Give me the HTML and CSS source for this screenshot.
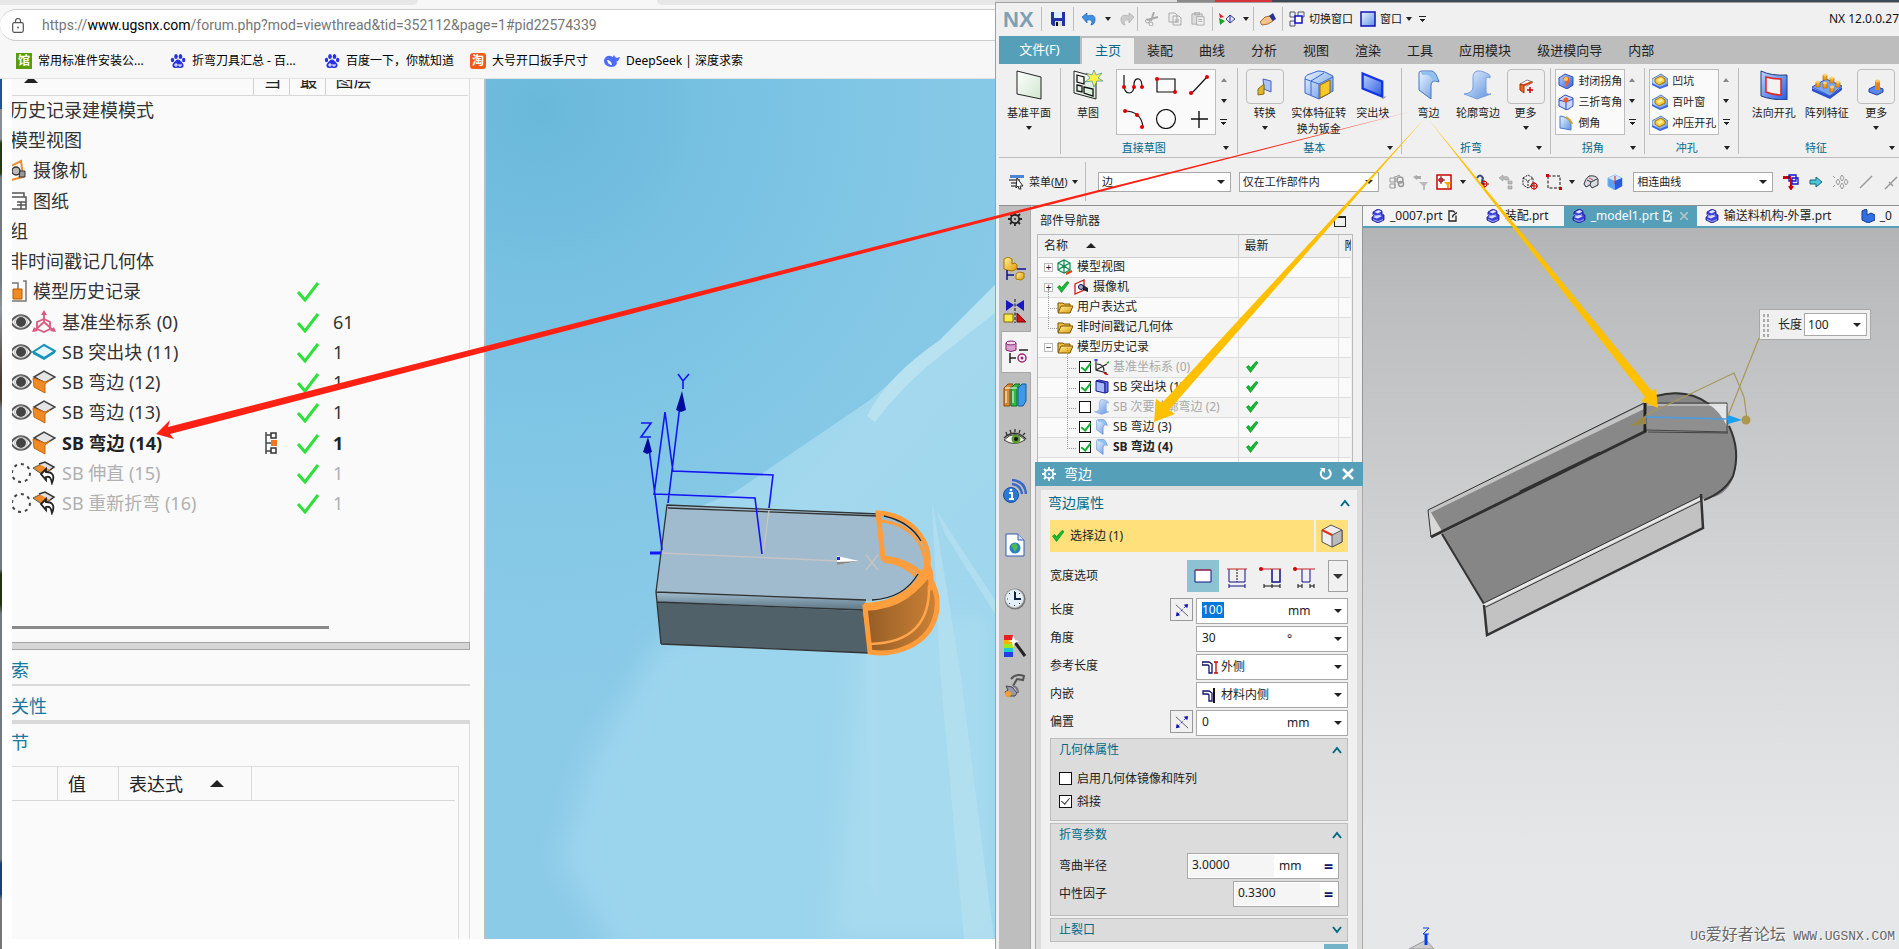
FILE: index.html
```html
<!DOCTYPE html>
<html lang="zh-CN">
<head>
<meta charset="utf-8">
<title>NX 12 弯边</title>
<link rel="stylesheet" href="styles.css">
</head>
<body>
<svg class="defs" aria-hidden="true">
  <defs>
    <linearGradient id="gBlue" x1="0" y1="0" x2="1" y2="1"><stop offset="0" stop-color="#eef5ff"/><stop offset="1" stop-color="#5c93e0"/></linearGradient>
    <linearGradient id="gDeep" x1="0" y1="0" x2="1" y2="1"><stop offset="0" stop-color="#bcd2ff"/><stop offset="1" stop-color="#2b5be0"/></linearGradient>
    <linearGradient id="gGold" x1="0" y1="0" x2="1" y2="1"><stop offset="0" stop-color="#fff3a0"/><stop offset="1" stop-color="#e09a00"/></linearGradient>
    <linearGradient id="gGreen" x1="0" y1="0" x2="1" y2="1"><stop offset="0" stop-color="#fff"/><stop offset="1" stop-color="#cfe6cf"/></linearGradient>
  </defs>
  <symbol id="check" viewBox="0 0 12 12"><path d="M.5 6l4 5.500L12 1.500 10 .5 4.500 6.800 2.600 4.500z" fill="#10c030" stroke="#078a1c" stroke-width=".7"/></symbol>
  <symbol id="tick" viewBox="0 0 22 20"><path d="M1 10l7 8L21 1" fill="none" stroke="#2ee03a" stroke-width="3"/></symbol>
  <symbol id="paw" viewBox="0 0 16 16"><g fill="#2932e1"><ellipse cx="6" cy="3.500" rx="1.800" ry="2.500"/><ellipse cx="10.500" cy="3.500" rx="1.800" ry="2.500"/><ellipse cx="2.500" cy="7" rx="1.700" ry="2.200"/><ellipse cx="13.700" cy="7" rx="1.700" ry="2.200"/><path d="M8 6.500c2 0 3 2 4.500 3.500 2 2 1 5-1.500 5-1 0-2-.3-3-.3s-2 .3-3 .3c-2.500 0-3.500-3-1.500-5C5 8.500 6 6.500 8 6.500z"/></g><path d="M5 13v-2h2v2zM9 11v2h2v-2" fill="none" stroke="#fff"/></symbol>
  <symbol id="prt" viewBox="0 0 14 14"><path d="M2 3l5-3 4 2v3l2 1v5l-6 3-6-3V8l2-1-1-1z" fill="#3c40d8" stroke="#15158a" stroke-width=".8"/><path d="M3.500 3l4-2 3 1.500-4 2zM2 8l5-2 4 1-5 2.500z" fill="#dfe4ff"/><path d="M2 5.500l4 2 4-2M2 10.500l5 2 5-2" fill="none" stroke="#b9c0ff" stroke-width=".8"/></symbol>
  <symbol id="note" viewBox="0 0 10 12"><path d="M8 5.500V11H1V1h4l2 1.500M4.500 7.500l.5-2 4-3" fill="none" stroke="currentColor" stroke-width="1.300"/></symbol>
  <symbol id="eye" viewBox="0 0 22 16"><path d="M1 8C6-1 16-1 21 8 16 17 6 17 1 8z" fill="#fff" stroke="#555" stroke-width="1.800"/><circle cx="11" cy="8" r="5" fill="#444"/><circle cx="11" cy="8" r="6.300" fill="none" stroke="#999" stroke-width=".8"/></symbol>
  <symbol id="eyeoff" viewBox="0 0 22 22"><circle cx="11" cy="11" r="9" fill="none" stroke="#444" stroke-width="2" stroke-dasharray="3 4"/></symbol>
  <symbol id="fl" viewBox="0 0 24 24"><path d="M2 7l10-6 11 6-10 6z" fill="#e5e5e5" stroke="#444" stroke-width="1.500"/><path d="M1 8l12 4 5-2-5 4v9L2 17z" fill="#f08a24" stroke="#c86a10"/></symbol>
  <symbol id="fold" viewBox="0 0 24 24"><path d="M1 7l10-5 10 5-10 7z" fill="#f08a24" stroke="#555"/><path d="M7 3l6-2 9 5-4 3" fill="#ddd" stroke="#333" stroke-width="1.500"/><path d="M9 13l5-5v3c7 0 9 4 6 11-1-5-2-7-6-6v3z" fill="#fff" stroke="#222" stroke-width="1.800"/></symbol>
  <symbol id="slab" viewBox="0 0 24 16"><path d="M12 1l11 6-11 7L1 8z" fill="#e8f6fb" stroke="#1494b8" stroke-width="2"/><path d="M1 8v2l11 6 11-7V7l-11 7z" fill="#1494b8"/></symbol>
  <symbol id="folder" viewBox="0 0 16 14"><path d="M1 12V3h5l1 1h6v3" fill="#f0c040" stroke="#7a5200"/><path d="M1 13L4 6h12l-3 7z" fill="url(#gGold)" stroke="#7a5200"/></symbol>
  <symbol id="bend" viewBox="0 0 22 30"><path d="M1 3Q1 1 4 1h10q4 1 7 11-2-1-4-1-4 0-4 5v13L1 20z" fill="url(#gBlue)" stroke="#3f76c4"/><path d="M3 2h10q5 1 7 9l-5-1q-3-6-11-5z" fill="#8ec1ef"/></symbol>
  <symbol id="contour" viewBox="0 0 30 30"><path d="M12 2q4-3 13 2 3 1 2 4-2-2-4 0v13q0 4 5 3l-14 5Q4 25 1 24q9-1 9-7V7q0-3 2-5z" fill="url(#gBlue)" stroke="#7a9edb"/></symbol>
  <symbol id="plate" viewBox="0 0 24 26"><path d="M3 3l17 7v13L3 16z" fill="url(#gDeep)" stroke="#1233e8" stroke-width="2"/><path d="M20 25l3-2" stroke="#999"/></symbol>
  <symbol id="cube" viewBox="0 0 30 30"><path d="M1 9Q1 5 6 4l8-3q3 0 7 1l8 4v15L15 29 1 23z" fill="url(#gBlue)" stroke="#3d64d0"/><path d="M1 9l14 5V29M15 14L29 7M7 11v14M7 11L20 3" fill="none" stroke="#3d64d0"/><path d="M16 15l10-5v13l-10 5z" fill="#f7c62a" stroke="#8a6a00"/></symbol>
  <symbol id="corner" viewBox="0 0 16 16"><path d="M1 5l6-4 8 3v8l-6 4-8-4z" fill="url(#gDeep)" stroke="#2f4fc0"/><path d="M5 5q3-3 6 0v4l-3 5-1-6z" fill="#f06020"/><circle cx="8" cy="6" r="2" fill="#ffd24a"/></symbol>
  <symbol id="corner3" viewBox="0 0 16 16"><path d="M1 5l6-4 8 3v8l-6 4-8-4z" fill="#c9d5ff" stroke="#2f4fc0"/><path d="M8 5v11M1 6l7 2 7-3" stroke="#2f4fc0" fill="none"/><circle cx="8" cy="6" r="2.500" fill="#f06020"/></symbol>
  <symbol id="cham" viewBox="0 0 16 16"><path d="M2 1q9 1 11 8v6L2 13z" fill="url(#gBlue)" stroke="#4a7ad0"/><path d="M8 2q5 3 6 7" stroke="#e0a020" stroke-width="2" fill="none"/></symbol>
  <symbol id="punch" viewBox="0 0 16 16"><path d="M0 6l9-5 7 5v5l-8 4-8-4z" fill="url(#gBlue)" stroke="#4f7ec8"/><path d="M0 10l8 4 8-3v2l-8 3-8-4z" fill="#3d6ae0"/><path d="M3 6l6-3 4 3v3l-6 3-4-3z" fill="#f7cf45" stroke="#a86c00"/><path d="M5 7l4-2 2 2-4 2z" fill="#fff1a0"/></symbol>
  <symbol id="gear" viewBox="0 0 14 14"><circle cx="7" cy="7" r="4.200" fill="none" stroke="currentColor" stroke-width="1.800"/><path d="M7 0v3M7 11v3M0 7h3M11 7h3M2 2l2 2M10 10l2 2M12 2l-2 2M4 10l-2 2" stroke="currentColor" stroke-width="1.800"/><circle cx="7" cy="7" r="1" fill="currentColor"/></symbol>
  <symbol id="flip" viewBox="0 0 16 16"><path d="M1 2l14 13" stroke="#555"/><path d="M3 13L13 3" stroke="#2a2ad0" stroke-dasharray="3 2"/><path d="M15 1l-1 5-4-4zM1 15l1-5 4 4z" fill="#1010b0"/></symbol>
  <symbol id="up" viewBox="0 0 10 8"><path d="M1 7l4-5 4 5" fill="none" stroke="#006a85" stroke-width="2"/></symbol>
</svg>

<main class="screen">
  <section class="browser">
    <div class="tabstrip"><span></span><span></span></div>
    <div class="address">
      <svg class="lock" viewBox="0 0 12 15"><rect x=".7" y="4.700" width="10.600" height="9.600" rx="1.500" fill="none" stroke="#555" stroke-width="1.200"/><path d="M3.500 4.500V3a2.500 2.500 0 015 0v1.500" fill="none" stroke="#555" stroke-width="1.200"/><circle cx="6" cy="9.500" r=".9" fill="#555"/></svg>
      <span class="url">https://<b>www.ugsnx.com</b>/forum.php?mod=viewthread&amp;tid=352112&amp;page=1#pid22574339</span>
    </div>
    <nav class="bookmarks">
      <a href="#" class="wide"><span class="fav green">馆</span>常用标准件安装公...</a>
      <a href="#" class="wide"><svg class="i16"><use href="#paw"/></svg>折弯刀具汇总 - 百...</a>
      <a href="#"><svg class="i16"><use href="#paw"/></svg>百度一下，你就知道</a>
      <a href="#"><span class="fav orange">淘</span>大号开口扳手尺寸</a>
      <a href="#"><svg class="i16" viewBox="0 0 16 16"><path d="M1 5q2-3 6-2 4 2 5 5l1 2q-1 4-6 4Q0 13 0 8q0-2 1-3z" fill="#4d6bfe"/><path d="M10 2q1 3 3 3 2-1 3-1-1 4-4 5l-4-4z" fill="#4d6bfe"/><path d="M3 7q4 0 5 5-4 0-5-5z" fill="#fff"/></svg>DeepSeek | 深度求索</a>
    </nav>
    <div class="page">
      <div class="edge"></div>
      <div class="post">
        <div class="panel">
          <div class="hbox">
          <table class="hist">
            <thead><tr><th><i class="tri"></i></th><th><span>当</span></th><th><span>最</span></th><th><span>图层</span></th></tr></thead>
            <tbody>
              <tr><td><div>历史记录建模模式</div></td><td></td><td></td><td></td></tr>
              <tr><td><div>模型视图</div></td><td></td><td></td><td></td></tr>
              <tr><td><div><svg class="half" viewBox="0 0 16 22"><path d="M0 7l10-5 2 16-12 3" fill="#fff" stroke="#f08a24" stroke-width="2"/><circle cx="5" cy="12" r="4" fill="#bbb" stroke="#333" stroke-width="1.500"/><path d="M9 12h5v6H8z" fill="#999" stroke="#333"/></svg>摄像机</div></td><td></td><td></td><td></td></tr>
              <tr><td><div><svg class="half" viewBox="0 0 16 22"><path d="M0 3h13v4H0M0 19h15V7h-9M6 12h9M10 12v7M6 15h9" fill="#fff" stroke="#555" stroke-width="1.500"/></svg>图纸</div></td><td></td><td></td><td></td></tr>
              <tr><td><div>组</div></td><td></td><td></td><td></td></tr>
              <tr><td><div>非时间戳记几何体</div></td><td></td><td></td><td></td></tr>
              <tr><td><div><svg class="half" viewBox="0 0 16 22"><path d="M0 3h7v8M12 1h3v20h-3M0 21h15" fill="none" stroke="#777" stroke-width="1.500"/><path d="M2 9h9v10H2z" fill="#f08a24" stroke="#b85c00"/></svg>模型历史记录</div></td><td></td><td><svg class="tk"><use href="#tick"/></svg></td><td></td></tr>
              <tr><td><div><svg class="ey"><use href="#eye"/></svg><svg class="fi" viewBox="0 0 24 24"><path d="M12 3v9L2 21M12 12l10 9M5 12l7-3 6 3v7l-6 3-7-3z" fill="none" stroke="#dc5a80" stroke-width="1.800"/><path d="M12 0l3 5H9zM0 22l2-5 4 4zM24 22l-6-1 4-4z" fill="#dc5a80"/></svg>基准坐标系 (0)</div></td><td></td><td><svg class="tk"><use href="#tick"/></svg></td><td>61</td></tr>
              <tr><td><div><svg class="ey"><use href="#eye"/></svg><svg class="fi"><use href="#slab"/></svg>SB 突出块 (11)</div></td><td></td><td><svg class="tk"><use href="#tick"/></svg></td><td>1</td></tr>
              <tr><td><div><svg class="ey"><use href="#eye"/></svg><svg class="fi"><use href="#fl"/></svg>SB 弯边 (12)</div></td><td></td><td><svg class="tk"><use href="#tick"/></svg></td><td>1</td></tr>
              <tr><td><div><svg class="ey"><use href="#eye"/></svg><svg class="fi"><use href="#fl"/></svg>SB 弯边 (13)</div></td><td></td><td><svg class="tk"><use href="#tick"/></svg></td><td>1</td></tr>
              <tr class="cur"><td><div><svg class="ey"><use href="#eye"/></svg><svg class="fi"><use href="#fl"/></svg>SB 弯边 (14)</div></td><td><svg class="mk" viewBox="0 0 12 22"><path d="M1 0v22M1 3h5M1 11h5M1 19h5" stroke="#444" stroke-width="1.500"/><path d="M6 1h5v5H6zM6 16h5v5H6z" fill="#fff" stroke="#333" stroke-width="1.500"/><path d="M6 8h6v6H6z" fill="#f07820"/></svg></td><td><svg class="tk"><use href="#tick"/></svg></td><td>1</td></tr>
              <tr class="off"><td><div><svg class="ey"><use href="#eyeoff"/></svg><svg class="fi"><use href="#fold"/></svg>SB 伸直 (15)</div></td><td></td><td><svg class="tk"><use href="#tick"/></svg></td><td>1</td></tr>
              <tr class="off"><td><div><svg class="ey"><use href="#eyeoff"/></svg><svg class="fi"><use href="#fold"/></svg>SB 重新折弯 (16)</div></td><td></td><td><svg class="tk"><use href="#tick"/></svg></td><td>1</td></tr>
            </tbody>
          </table>
          <div class="hbar"></div>
          </div>
          <div class="splitter"></div>
          <a href="#" class="sec">索</a>
          <a href="#" class="sec thick">关性</a>
          <div class="detail">
            <a href="#" class="sec3">节</a>
            <table class="expr"><thead><tr><th></th><th>值</th><th>表达式<i class="tri"></i></th><th></th></tr></thead></table>
          </div>
        </div>
        <svg class="photo" viewBox="486 79 509 860" preserveAspectRatio="none">
          <defs>
            <radialGradient id="sky" gradientUnits="userSpaceOnUse" cx="540" cy="110" r="620"><stop offset="0" stop-color="#69b8da"/><stop offset=".3" stop-color="#78c1e2"/><stop offset=".65" stop-color="#84c8e6"/><stop offset="1" stop-color="#8ccbe8"/></radialGradient>
            <linearGradient id="ray" x1="0" y1="0" x2="1" y2="1"><stop offset="0" stop-color="#98d2ec"/><stop offset=".5" stop-color="#a8dbef"/><stop offset="1" stop-color="#a2d8ee"/></linearGradient>
            <linearGradient id="roll" x1="0" y1="0" x2="0" y2="1"><stop offset="0" stop-color="#a4bfd0"/><stop offset=".5" stop-color="#7a95a6"/><stop offset="1" stop-color="#5c7380"/></linearGradient>
            <linearGradient id="oran" x1="0" y1="0" x2="1" y2="0"><stop offset="0" stop-color="#955c25"/><stop offset=".35" stop-color="#a96a2c"/><stop offset="1" stop-color="#cc8136"/></linearGradient>
            <filter id="soft" x="-30%" y="-30%" width="160%" height="160%"><feGaussianBlur stdDeviation="12"/></filter>
          </defs>
          <path d="M486 79h509v860H486z" fill="url(#sky)"/>
          <path d="M995 285L940 340 870 400 735 492 680 515v120h315z" fill="url(#ray)" opacity=".85"/>
          <path d="M660 640L590 760 560 860l60 100h400V610H800z" fill="#9bd4ed" filter="url(#soft)"/>
          <path d="M860 610h135v329H830z" fill="#a6daef" filter="url(#soft)"/>
          <path d="M940 340l55-55v28L945 352q-40 30-70 70l-8-6q20-40 73-76z" fill="#b9e2f1"/>
          <path d="M932 500l10 60 18 110 34 269h-30l-24-269zM936 510l59 90v14l-50-80z" fill="#b7e1f1" opacity=".7"/>
          <path d="M867 650h12v250l-12-20z" fill="#aadcf0" opacity=".6"/>
          <path d="M667 505l212 10c35 4 52 30 50 52-8 20-32 33-63 34l-210-9z" fill="#9fbbcd"/>
          <path d="M656 592l210 8-3 11-206-9z" fill="url(#roll)"/>
          <path d="M657 602l206 9 6 42-208-9z" fill="#50616a"/>
          <path d="M661 644l-5-52 11-87 212 9M656 592l210 8M657 602l206 8M661 644l208 9M668 508l210 8" fill="none" stroke="#333" stroke-width="1.300"/>
          <path d="M662 553l177 8M769 510l-6 45" stroke="#c9c3c3" stroke-width="1.300"/>
          <path d="M837 556l22 5-22 4z" fill="#fff"/><path d="M837 562l22-1-22 4z" fill="#888"/><path d="M837 557h3v3h-3z" fill="#22f"/>
          <path d="M866 555l12 15M878 555l-12 15" stroke="#c9c3c3" stroke-width="1.500"/>
          <g fill="none" stroke="#1414f5" stroke-width="1.600"><path d="M662 550l-14-110M668 503l12-98M654 495l11-83 8 60M655 494l100 4 7 56M673 471l100 4-4 33"/><path d="M650 553h11" stroke-width="3"/><path d="M678 374l5 7 6-7M683 381v8M641 423h10l-10 14h10"/></g>
          <path d="M682 391l-6 19 5 2 5-2zM648 437l-5 15 4 2 5-2z" fill="#000a9c"/>
          <path d="M865 607c38-4 52-18 63-32 18 28 9 62-25 74q-16 6-33 3z" fill="url(#oran)" stroke="#ff9d3c" stroke-width="5"/>
          <path d="M870 644c42-1 60-22 59-58" fill="none" stroke="#ffa54a" stroke-width="2.500"/>
          <path d="M864 607c34-1 55-18 64-40" fill="none" stroke="#ff9f3e" stroke-width="8"/>
          <path d="M930 590q3-15-2-25c3-25-18-50-50-52l5 45c14 1 30 7 40 18" fill="none" stroke="#ff9d3c" stroke-width="5"/>
          <path d="M882 521c26 3 45 20 44 54M883 561c15 1 25 7 34 16" fill="none" stroke="#ff9d3c" stroke-width="3"/>
          <path d="M884 516c18 4 30 13 37 25M872 600c20-1 36-9 46-26" fill="none" stroke="#222" stroke-width="1.300"/>
        </svg>
      </div>
    </div>
  </section>

  <section class="nx">
    <header class="title">
      <strong class="logo">NX</strong>
      <div class="qa s1"><button aria-label="保存"><svg class="i14" viewBox="0 0 14 14"><path d="M0 0h14v14H2l-2-2z" fill="#2034a8"/><path d="M3 0h8v6H3z" fill="#dcefff"/><path d="M4 9h7v5H4z" fill="#ddd"/><path d="M5 10h2v4H5z" fill="#111"/></svg></button></div>
      <div class="qa s2"><button aria-label="撤消"><svg class="i14" viewBox="0 0 14 14"><path d="M0 5l5-4v3q9-3 8 5-1 4-4 4 3-6-4-5v3z" fill="#3f8fe8" stroke="#1e64bc" stroke-width=".7"/></svg></button><i class="car"></i><button aria-label="重做"><svg class="i14" viewBox="0 0 14 14"><path d="M14 5L9 1v3Q0 1 1 9q1 4 4 4-3-6 4-5v3z" fill="#ccc" stroke="#aaa" stroke-width=".7"/></svg></button></div>
      <div class="qa s3"><button aria-label="剪切"><svg class="i14" viewBox="0 0 14 14"><path d="M9 0L6 9M13 5L2 8" stroke="#aaa" stroke-width="2"/><circle cx="2.500" cy="9" r="2" fill="none" stroke="#aaa"/><circle cx="6" cy="12" r="2" fill="none" stroke="#aaa"/></svg></button><button aria-label="复制"><svg class="i14" viewBox="0 0 14 14"><path d="M1 1h6l2 2v7H1zM5 4h6l2 2v7H5z" fill="#eee" stroke="#aaa"/><path d="M7 8h4M7 10h4" stroke="#aaa"/></svg></button><button aria-label="粘贴"><svg class="i14" viewBox="0 0 15 15"><path d="M1 2h11v11H1zM4 0h5v3H4z" fill="#ddd" stroke="#aaa"/><path d="M6 5h8v9H6z" fill="#eee" stroke="#aaa"/><path d="M8 8h4M8 10h4" stroke="#aaa"/></svg></button></div>
      <div class="qa s4"><button aria-label="定向"><svg class="i16" viewBox="0 0 16 14"><path d="M0 1l5 4-4 1z" fill="#d22"/><path d="M0 6l6 3-5 4z" fill="#1a2"/><path d="M7 7l4-4 5 4-5 4z" fill="#dfe8ff" stroke="#446"/><path d="M11 3v8" stroke="#22c"/></svg></button><i class="car"></i></div>
      <div class="qa s5"><button aria-label="触控"><svg class="i16" viewBox="0 0 16 14"><path d="M0 10l5-5 5-1 3 5-5 3-6 1z" fill="#f2c48c" stroke="#a86c30"/><path d="M9 4l4-3 3 6-3 2z" fill="#26319c"/></svg></button></div>
      <div class="qa s6"><button><svg class="i16" viewBox="0 0 16 16"><path d="M1 1h5v5H1zM9 1h6v5H9zM1 10h5v5H1z" fill="#e8eeff" stroke="#556"/><path d="M6 5h7v7H6z" fill="#fff" stroke="#11c" stroke-width="1.500"/></svg>切换窗口</button><button><svg class="i16" viewBox="0 0 16 16"><path d="M1 1h14v14H1z" fill="url(#gBlue)" stroke="#11b" stroke-width="1.500"/></svg>窗口<i class="car"></i></button><i class="car bar"></i></div>
      <span class="ver">NX 12.0.0.27</span>
    </header>
    <nav class="tabs">
      <button class="file">文件(F)</button><button class="on">主页</button><button>装配</button><button>曲线</button><button>分析</button><button>视图</button><button>渲染</button><button>工具</button><button>应用模块</button><button>级进模向导</button><button>内部</button>
    </nav>
    <div class="ribbon">
      <div class="grp"><div class="row"><button class="big"><svg class="ico" viewBox="0 0 30 30"><path d="M3 1l24 6v22L3 24z" fill="url(#gGreen)" stroke="#222"/></svg>基准平面<i class="car"></i></button></div></div>
      <div class="grp"><div class="row"><button class="big sk"><svg class="ico" viewBox="0 0 30 30"><path d="M1 1l22 6v22L1 23z" fill="url(#gGreen)" stroke="#222"/><path d="M4 5l7 2v7l-7-2zM4 15l5 1v6l-5-1zM11 17l9 2v7l-9-3z" fill="none" stroke="#111" stroke-width="1.300"/><path d="M21 0l2 5 6-2-4 5 5 3-6 0-3 6-2-6-7 1 5-4-4-5 6 2z" fill="#fff34a" stroke="#3d8ca0" stroke-width=".7"/></svg>草图</button>
        <div class="gal">
          <svg viewBox="0 0 22 20"><path d="M2 0v9q0 9 5 9t5-8q0-7 5-6 3 1 3 9" fill="none" stroke="#111" stroke-width="1.200"/><g fill="#d00"><circle cx="2" cy="12" r="2"/><circle cx="12" cy="12" r="2"/><circle cx="20" cy="12" r="2"/></g></svg>
          <svg viewBox="0 0 22 20"><path d="M2 4h18v13H2z" fill="none" stroke="#111" stroke-width="1.200"/><g fill="#d00"><circle cx="2" cy="4" r="2"/><circle cx="20" cy="17" r="2"/></g></svg>
          <svg viewBox="0 0 22 20"><path d="M3 19L19 2" stroke="#111" stroke-width="1.200"/><g fill="#d00"><circle cx="3" cy="18" r="2"/><circle cx="19" cy="2" r="2"/></g></svg>
          <svg viewBox="0 0 22 20"><path d="M2 2q18 0 19 17" fill="none" stroke="#111" stroke-width="1.200"/><g fill="#d00"><circle cx="3" cy="2" r="2"/><circle cx="15" cy="6" r="2"/><circle cx="20" cy="18" r="2"/></g></svg>
          <svg viewBox="0 0 22 20"><circle cx="11" cy="10" r="9.500" fill="none" stroke="#111" stroke-width="1.200"/></svg>
          <svg viewBox="0 0 22 20"><path d="M11 2v17M3 10h17" stroke="#111" stroke-width="1.400"/></svg>
        </div><div class="cars"><i class="car upw"></i><i class="car"></i><i class="car bar"></i></div></div>
        <div class="cap"><span>直接草图</span><i class="car"></i></div></div>
      <div class="grp"><div class="row"><button class="big w48"><span class="frame"><svg class="i18" viewBox="0 0 18 18"><path d="M7 1l8 2v11l-7-3z" fill="#aac4ff" stroke="#4a60b0"/><path d="M2 11l6-5v10l-6 1z" fill="#e2b62a" stroke="#8a6a10"/></svg></span>转换<i class="car"></i></button><button class="big w66"><svg class="ico"><use href="#cube"/></svg>实体特征转换为钣金</button><button class="big w48"><svg class="ico"><use href="#plate"/></svg>突出块</button></div>
        <div class="cap"><span>基本</span><i class="car"></i></div></div>
      <div class="grp"><div class="row"><button class="big w48"><svg class="ico"><use href="#bend"/></svg>弯边</button><button class="big w54"><svg class="ico"><use href="#contour"/></svg>轮廓弯边</button><button class="big w40"><span class="frame"><svg class="i18" viewBox="0 0 18 18"><path d="M3 6l7-4 6 2-6 4z" fill="#fff" stroke="#888"/><path d="M3 6l4 1v8l-4-3z" fill="#e86820" stroke="#a03000"/><path d="M7 7l8-3" stroke="#e04010" stroke-width="2"/><path d="M13 9v6M10 12h6" stroke="#c00" stroke-width="1.500"/></svg></span>更多<i class="car"></i></button></div>
        <div class="cap"><span>折弯</span><i class="car"></i></div></div>
      <div class="grp"><div class="row"><div class="list"><button><svg class="i16"><use href="#corner"/></svg>封闭拐角</button><button><svg class="i16"><use href="#corner3"/></svg>三折弯角</button><button><svg class="i16"><use href="#cham"/></svg>倒角</button></div><div class="cars"><i class="car upw"></i><i class="car"></i><i class="car bar"></i></div></div><div class="cap"><span>拐角</span><i class="car"></i></div></div>
      <div class="grp"><div class="row"><div class="list"><button><svg class="i16"><use href="#punch"/></svg>凹坑</button><button><svg class="i16"><use href="#punch"/></svg>百叶窗</button><button><svg class="i16"><use href="#punch"/></svg>冲压开孔</button></div><div class="cars"><i class="car upw"></i><i class="car"></i><i class="car bar"></i></div></div><div class="cap"><span>冲孔</span><i class="car"></i></div></div>
      <div class="grp"><div class="row"><button class="big w54 ml"><svg class="ico" viewBox="0 0 30 30"><path d="M2 1q10 5 26 4v25q-16 0-26-4z" fill="url(#gDeep)" stroke="#1b3c78"/><path d="M7 7q7 2 15 2v16q-8 0-15-3z" fill="#f2f2f2" stroke="#d22" stroke-width="1.500"/></svg>法向开孔</button><button class="big w54"><svg class="ico" viewBox="0 0 30 30"><path d="M0 17l14-8 16 7-12 10z" fill="#7ca4f4" stroke="#3358c8"/><path d="M0 18l18 8 12-9v3l-12 9L0 21z" fill="#2b50d0"/><g fill="#eda01e" stroke="#a85c00" stroke-width=".6"><path d="M11 5h4v5h-4zM18 8h4v5h-4zM24 12h4v5h-4zM4 12h4v5H4zM11 13h4v5h-4zM18 17h4v5h-4z"/></g><g fill="#ffd56a"><ellipse cx="13" cy="5" rx="2" ry="1.500"/><ellipse cx="20" cy="8" rx="2" ry="1.500"/><ellipse cx="26" cy="12" rx="2" ry="1.500"/><ellipse cx="6" cy="12" rx="2" ry="1.500"/><ellipse cx="13" cy="13" rx="2" ry="1.500"/><ellipse cx="20" cy="17" rx="2" ry="1.500"/></g></svg>阵列特征</button><button class="big w48"><span class="frame"><svg class="i18" viewBox="0 0 18 18"><path d="M2 11l6-3 8 3v3l-6 3-8-3z" fill="#5b86ea" stroke="#1b3fa0"/><path d="M8 3h5v9H8z" fill="#f08018"/><ellipse cx="10.500" cy="3" rx="2.500" ry="1.500" fill="#ffc060"/></svg></span>更多<i class="car"></i></button></div><div class="cap"><span>特征</span><i class="car"></i></div></div>
    </div>
    <div class="selbar">
      <button class="menu"><svg class="i16" viewBox="0 0 16 16"><path d="M1 1h14v3H1z" fill="#4a84d8"/><path d="M0 6h11M2 9h7M2 12h7" stroke="#555" stroke-width="1.500"/><path d="M8 4l6 8-3 0 1 3-2 0-1-3-2 2z" fill="#fff" stroke="#222"/></svg><span>菜单(<u>M</u>)</span><i class="car"></i></button>
      <span class="combo c1"><select aria-label="类型过滤器"><option>边</option></select></span>
      <span class="combo c2"><select aria-label="选择范围"><option>仅在工作部件内</option></select></span>
      <div class="tools">
        <svg class="i16" viewBox="0 0 16 16"><path d="M6 2v12M1 4h5v4H1zM1 10h5v4H1zM6 3l5-2" fill="none" stroke="#999"/><circle cx="11" cy="6" r="3" fill="none" stroke="#999" stroke-width="1.500"/><circle cx="12" cy="10" r="2.500" fill="none" stroke="#999" stroke-width="1.500"/></svg>
        <svg class="i16" viewBox="0 0 16 16"><path d="M1 3l4-2v1h4v3H5v1z" fill="#aaa"/><path d="M7 8h9l-3 4v4h-2v-4z" fill="#bbb"/></svg>
        <svg class="i16" viewBox="0 0 16 16"><path d="M1 1h14v14H1z" fill="#fff" stroke="#c00" stroke-width="1.500"/><circle cx="5" cy="6" r="2" fill="none" stroke="#900"/><path d="M5 2v8M2 6h7" stroke="#900"/><path d="M8 8h7l-2 3v3h-2v-3z" fill="#f5a400"/></svg><i class="car"></i>
        <svg class="i16" viewBox="0 0 16 16"><path d="M3 4q3-5 6 0-2 4 1 7" fill="none" stroke="#334c80" stroke-width="2"/><circle cx="10" cy="10" r="3" fill="none" stroke="#c00"/><path d="M10 6v9M6 10h9" stroke="#c00"/></svg>
        <svg class="i16" viewBox="0 0 16 16"><path d="M1 4l4-3v2q6-2 6 3H7q0-1-2-1v2zM10 7h4v3h-4zM10 12h4v3h-4z" fill="#bbb" stroke="#999" stroke-width=".6"/></svg>
        <svg class="i16" viewBox="0 0 16 16"><path d="M1 4l5-3 5 3v7l-5 3-5-3zM1 4l5 3 5-3M6 7v7" fill="none" stroke="#222" stroke-dasharray="2 1"/><circle cx="12" cy="12" r="3" fill="none" stroke="#c00"/><path d="M12 8v8M8 12h8" stroke="#c00"/></svg>
        <svg class="i16" viewBox="0 0 16 16"><path d="M2 2h12v12H2z" fill="none" stroke="#111" stroke-dasharray="3 1.500"/><path d="M0 0h3v3H0zM13 13h3v3h-3z" fill="#c00"/></svg><i class="car"></i>
        <svg class="i16" viewBox="0 0 16 16"><path d="M1 10q1-5 5-8 7-1 9 3v6l-6 3-2-3-4 2z" fill="#d9dce2" stroke="#334"/><path d="M4 6l4 2 6-3M8 8l-1 3" fill="none" stroke="#334"/><path d="M6 4l4 2" stroke="#c44"/></svg>
        <svg class="i16" viewBox="0 0 16 16"><path d="M1 4l7-3 7 3v8l-7 4-7-4z" fill="#5fa0ee" stroke="#7ab0f0"/><path d="M1 4l7 3 7-3-7-3z" fill="#cfe4ff"/><path d="M8 7v9l7-4V4z" fill="#2c58e0"/><path d="M8 2v8" stroke="#c22"/></svg>
      </div>
      <span class="combo c3"><select aria-label="曲线规则"><option>相连曲线</option></select></span>
      <div class="tools t2">
        <svg class="i16" viewBox="0 0 16 16"><path d="M0 2h8v3H0z" fill="#c00"/><path d="M6 1h7v6H6zM9 4h6v6H9z" fill="none" stroke="#11c" stroke-width="1.300"/><path d="M8 5v10M6 12l2 3 2-3" stroke="#c00" stroke-width="2" fill="none"/></svg>
        <svg class="i16" viewBox="0 0 16 16"><path d="M2 6h6V3l6 5-6 5v-3H2z" fill="#4ec4d8" stroke="#17667a"/></svg>
        <svg class="i16" viewBox="0 0 16 16"><path d="M9 1l2 3-2 3-2-3zM9 9l2 3-2 3-2-3zM5 5l2 3-2 3-2-3zM13 5l2 3-2 3-2-3zM0 2l2 2M0 13l2-2" fill="none" stroke="#999"/></svg>
        <svg class="i16" viewBox="0 0 16 16"><path d="M2 14L14 2" stroke="#999" stroke-width="1.500"/></svg>
        <svg class="i16" viewBox="0 0 16 16"><path d="M2 15L14 3M6 8l4 4" stroke="#999" stroke-width="1.500"/></svg>
      </div>
    </div>
    <div class="work">
      <aside class="rail">
        <button class="r0" aria-label="设置"><svg class="i14"><use href="#gear"/></svg></button>
        <button aria-label="装配导航器"><svg viewBox="0 0 24 24"><path d="M1 2l4-2 4 2v5l3-1 2 2v4l-5 2-5-1-3-1z" fill="url(#gGold)" stroke="#a87400"/><path d="M4 13v10M4 18h7M14 12h9" stroke="#11148a" stroke-width="1.500"/><path d="M13 17l3-2 5 1v5l-3 2-5-1z" fill="url(#gGold)" stroke="#a87400"/></svg></button>
        <button aria-label="约束导航器"><svg viewBox="0 0 24 24"><path d="M3 1l8 5-8 6zM21 1l-8 5 8 6z" fill="#1818c0"/><path d="M12 0v24" stroke="#111" stroke-dasharray="3 1.500"/><path d="M1 15h9v8H1z" fill="#ffe94a" stroke="#7a6a00"/><path d="M14 14l9 9h-9z" fill="#d01818" stroke="#700"/></svg></button>
        <button class="on" aria-label="部件导航器"><svg viewBox="0 0 24 24"><path d="M1 3q5-3 10 0v7q-5 3-10 0z" fill="#d9a2cc" stroke="#8a2078"/><ellipse cx="6" cy="3" rx="5" ry="2" fill="#f4dcee" stroke="#8a2078"/><path d="M5 13v10M5 18h6M14 10h9" stroke="#222" stroke-width="1.500"/><circle cx="17" cy="18" r="4" fill="none" stroke="#9a2878" stroke-width="1.500"/><circle cx="17" cy="18" r="1.500" fill="#9a2878"/></svg></button>
        <button aria-label="重用库"><svg viewBox="0 0 24 24"><path d="M1 5l4-4h5L7 5v18H1z" fill="#d88a30" stroke="#8a4a00"/><path d="M8 5l4-4h5l-3 4v18H8z" fill="#30b848" stroke="#107020"/><path d="M15 5l4-4h4v17l-3 5h-5z" fill="#3c9ae8" stroke="#1858a0"/><path d="M2 5h12M3 8v12M10 8v12" stroke="#fff"/></svg></button>
        <button aria-label="查看"><svg viewBox="0 0 24 24"><path d="M1 15Q12 4 22 15q-11 7-21 0z" fill="#f2f2ea" stroke="#444"/><circle cx="13" cy="14" r="4.500" fill="#5a9a30"/><circle cx="13" cy="14" r="2" fill="#111"/><path d="M1 13Q12 3 23 14M4 10L3 7M8 8L7 5M12 7V4M16 8l1-3M20 10l2-2" stroke="#333" stroke-width="1.300" fill="none"/></svg></button>
        <button class="far" aria-label="HD3D"><svg viewBox="0 0 24 24"><circle cx="8" cy="16" r="7.500" fill="#2a78d8" stroke="#1850a0"/><path d="M6 14h3v6M6 20h5" stroke="#fff" stroke-width="2" fill="none"/><circle cx="8" cy="11" r="1.300" fill="#fff"/><path d="M9 1q13 1 14 14M9 5q9 1 10 10" fill="none" stroke="#3a68c8" stroke-width="2.500"/></svg></button>
        <button class="tall" aria-label="浏览器"><svg viewBox="0 0 24 24"><path d="M3 1h12l6 6v16H3z" fill="#fff" stroke="#3458b0"/><path d="M15 1v6h6" fill="#cde" stroke="#3458b0"/><circle cx="12" cy="15" r="5.500" fill="#2a80c8"/><path d="M8 12l5-2 2 4-3 5-2-3z" fill="#4cba50"/></svg></button>
        <button class="tall" aria-label="历史记录"><svg viewBox="0 0 24 24"><circle cx="12" cy="12" r="10.500" fill="#777"/><circle cx="11.500" cy="11.500" r="9" fill="#e4f0fa" stroke="#ccc"/><path d="M12 5v7h6" fill="none" stroke="#124" stroke-width="2"/><path d="M11.500 4v1M4 12h1M11.500 18v1M6 6l1 1M6 17l1-1M17 17l-1-1M17 6l-1 1" stroke="#345"/></svg></button>
        <button class="low" aria-label="工艺"><svg viewBox="0 0 24 24"><path d="M1 1h9v5H1z" fill="#e82020"/><path d="M1 6h9v4H1z" fill="#ffb000"/><path d="M1 10h9v4H1z" fill="#a0e820"/><path d="M1 14h9v4H1z" fill="#20c8d0"/><path d="M1 18h9v5H1z" fill="#2040e0"/><path d="M11 7l11 15" stroke="#222" stroke-width="3"/><path d="M10 1l2 5 4 1-4 2-2 4-1-5-4-1 4-1z" fill="#fff"/></svg></button>
        <button class="low" aria-label="角色"><svg viewBox="0 0 24 24"><path d="M8 5q5-6 13-3l-1 4-6-1-4 7" fill="none" stroke="#555" stroke-width="2"/><path d="M3 12l6 1 5 6-2 3H4l-2-4 3-2z" fill="#99a" stroke="#445"/><circle cx="5" cy="20" r="3" fill="#f0a030"/><path d="M10 12q5 1 5 7" fill="none" stroke="#778" stroke-width="2"/></svg></button>
      </aside>
      <section class="nav">
        <div class="nhead"><span>部件导航器</span><button class="max" aria-label="最大化"></button></div>
        <div class="tbox"><table class="tree">
          <thead><tr><th>名称<i class="tri"></i></th><th>最新</th><th>附</th></tr></thead>
          <tbody>
            <tr><td><div><button class="ex">+</button><svg class="i16" viewBox="0 0 16 16"><path d="M1 4l6-3 6 3v7l-6 3-6-3zM1 4l6 3 6-3M7 1v13M1 11l6-4 6 4" fill="none" stroke="#0a8a50" stroke-width="1.200"/><path d="M9 15l6-3" stroke="#e04010" stroke-width="2"/></svg>模型视图</div></td><td></td><td></td></tr>
            <tr><td><div><button class="ex">+</button><svg class="i12"><use href="#check"/></svg><svg class="i16" viewBox="0 0 16 16"><path d="M2 5l9-4v10l-9 4z" fill="#fff" stroke="#d01818" stroke-width="1.300"/><circle cx="8" cy="8" r="2.500" fill="#aac" stroke="#114"/><path d="M10 6l5 3v4l-5-2z" fill="#223"/></svg>摄像机</div></td><td></td><td></td></tr>
            <tr><td><div class="in1"><svg class="i16"><use href="#folder"/></svg>用户表达式</div></td><td></td><td></td></tr>
            <tr><td><div class="in1"><svg class="i16"><use href="#folder"/></svg>非时间戳记几何体</div></td><td></td><td></td></tr>
            <tr><td><div><button class="ex">−</button><svg class="i16"><use href="#folder"/></svg>模型历史记录</div></td><td></td><td></td></tr>
            <tr class="off"><td><label class="in2"><input type="checkbox" checked><svg class="i16" viewBox="0 0 16 16"><path d="M2 3v8l11 3M2 11l11-6M3 5q7 0 7 7" fill="none" stroke="#222" stroke-width="1.200"/><path d="M0 1h4M2 0v3" stroke="#11c"/><path d="M13 4l2-1" stroke="#0a0" stroke-width="1.500"/><path d="M10 14l4 2" stroke="#c11" stroke-width="1.500"/></svg>基准坐标系 (0)</label></td><td><svg class="i12"><use href="#check"/></svg></td><td></td></tr>
            <tr><td><label class="in2"><input type="checkbox" checked><svg class="i16" viewBox="0 0 16 16"><path d="M2 2l9 2v10l-9-2z" fill="#a8b8ff" stroke="#1a1a90"/><path d="M2 2l3-1 9 2v10l-3 1V4z" fill="#6474e0" stroke="#1a1a90"/></svg>SB 突出块 (1)</label></td><td><svg class="i12"><use href="#check"/></svg></td><td></td></tr>
            <tr class="off"><td><label class="in2"><input type="checkbox"><svg class="i16"><use href="#contour"/></svg>SB 次要轮廓弯边 (2)</label></td><td><svg class="i12"><use href="#check"/></svg></td><td></td></tr>
            <tr><td><label class="in2"><input type="checkbox" checked><svg class="i16"><use href="#bend"/></svg>SB 弯边 (3)</label></td><td><svg class="i12"><use href="#check"/></svg></td><td></td></tr>
            <tr class="cur"><td><label class="in2"><input type="checkbox" checked><svg class="i16"><use href="#bend"/></svg>SB 弯边 (4)</label></td><td><svg class="i12"><use href="#check"/></svg></td><td></td></tr>
            <tr class="last"><td></td><td></td><td></td></tr>
          </tbody>
        </table></div>
        <form class="dlg">
          <div class="dh"><svg class="i14"><use href="#gear"/></svg><span>弯边</span><button type="button" aria-label="重置"><svg class="i14" viewBox="0 0 14 14"><path d="M4 2.500a5 5 0 105.500 0" fill="none" stroke="#fff" stroke-width="2"/><path d="M1 1h5v5z" fill="#fff"/></svg></button><button type="button" aria-label="关闭"><svg class="i14" viewBox="0 0 14 14"><path d="M2 2l10 10M12 2L2 12" stroke="#fff" stroke-width="2.500"/></svg></button></div>
          <div class="db"><div class="inner">
            <div class="h1"><span>弯边属性</span><svg class="chev"><use href="#up"/></svg></div>
            <div class="body">
              <div class="pick"><div><svg class="i12"><use href="#check"/></svg>选择边 (1)</div><button type="button" aria-label="边"><svg class="i24" viewBox="0 0 24 24"><path d="M2 6l9-5 11 5v12l-10 5-10-5z" fill="#eee" stroke="#555"/><path d="M12 11l10-5v12l-10 5z" fill="#bbb" stroke="#555"/><path d="M2 6l10 5" stroke="#e03010" stroke-width="2"/></svg></button></div>
              <div class="opts"><span>宽度选项</span>
                <button type="button" class="on" aria-label="完整"><svg viewBox="0 0 24 24"><path d="M4 6h16v12H4z" fill="#fff" stroke="#11118a"/><path d="M4 6h16" stroke="#c22"/></svg></button>
                <button type="button" aria-label="在中心"><svg viewBox="0 0 24 24"><path d="M4 5v13h16V5M4 20v4M20 20v4M4 22h16" fill="none" stroke="#11118a"/><path d="M12 5v13" stroke="#111" stroke-dasharray="2 1"/><path d="M2 5h20" stroke="#c22"/></svg></button>
                <button type="button" aria-label="在端点"><svg viewBox="0 0 24 24"><path d="M13 5v13h8V5" fill="none" stroke="#11118a" stroke-width="1.500"/><path d="M5 22h16M5 20v4M13 20v4M21 20v4" stroke="#111"/><path d="M2 5h20" stroke="#c22"/><circle cx="2" cy="5" r="2" fill="#c00"/></svg></button>
                <button type="button" aria-label="从两端"><svg viewBox="0 0 24 24"><path d="M9 5v13h8V5" fill="none" stroke="#11118a"/><path d="M5 22h4M17 22h4M5 20v4M9 20v4M17 20v4M21 20v4" stroke="#111"/><path d="M2 5h20" stroke="#c22"/><circle cx="2" cy="5" r="2" fill="#c00"/></svg></button>
                <button type="button" class="dd" aria-label="更多"><i class="car"></i></button></div>
              <div class="fr"><label for="len">长度</label><button type="button" class="fl" aria-label="反向"><svg class="i14"><use href="#flip"/></svg></button><span class="fld"><span class="selv"><input id="len" value="100"></span><select aria-label="单位"><option>mm</option></select></span></div>
              <div class="fr"><label for="ang">角度</label><span class="fld"><input id="ang" value="30"><select aria-label="单位"><option>°</option></select></span></div>
              <div class="fr"><label for="ref">参考长度</label><span class="fld ic"><svg class="i16" viewBox="0 0 16 16"><path d="M0 3h7l3 2v9H7V7L6 6H0z" fill="#fff" stroke="#11116a" stroke-width="1.300"/><path d="M14 3v11M12 3h4M12 14h4" stroke="#c00" stroke-width="1.300"/></svg><select id="ref"><option>外侧</option></select></span></div>
              <div class="fr"><label for="ins">内嵌</label><span class="fld ic"><svg class="i16" viewBox="0 0 16 16"><path d="M1 4h6l3 2v8H7V8L6 7H1z" fill="#fff" stroke="#11116a" stroke-width="1.300"/><path d="M12 1v15" stroke="#111" stroke-width="2"/></svg><select id="ins"><option>材料内侧</option></select></span></div>
              <div class="fr"><label for="off">偏置</label><button type="button" class="fl" aria-label="反向"><svg class="i14"><use href="#flip"/></svg></button><span class="fld"><input id="off" value="0"><select aria-label="单位"><option>mm</option></select></span></div>
              <fieldset class="g1"><div class="gh"><span>几何体属性</span><svg class="chev"><use href="#up"/></svg></div>
                <label class="cb"><input type="checkbox">启用几何体镜像和阵列</label><label class="cb"><input type="checkbox" checked>斜接</label></fieldset>
              <fieldset class="g2"><div class="gh"><span>折弯参数</span><svg class="chev"><use href="#up"/></svg></div>
                <div class="gr"><label for="rad">弯曲半径</label><span class="eq"><input id="rad" value="3.0000"><span>mm</span><b>=</b></span></div>
                <div class="gr"><label for="neu">中性因子</label><span class="eq sm"><input id="neu" value="0.3300"><b>=</b></span></div></fieldset>
              <fieldset class="g3"><div class="gh"><span>止裂口</span><svg class="chev dn"><use href="#up"/></svg></div></fieldset>
              <div class="ok"></div>
            </div>
          </div></div>
        </form>
      </section>
      <section class="view">
        <div class="ptabs"><button><svg class="i14"><use href="#prt"/></svg>_0007.prt<svg class="nt"><use href="#note"/></svg></button><button class="p2"><svg class="i14"><use href="#prt"/></svg>装配.prt</button><button class="on"><svg class="i14"><use href="#prt"/></svg>_model1.prt<svg class="nt"><use href="#note"/></svg><svg class="xx" viewBox="0 0 8 8"><path d="M0 0l8 8M8 0L0 8" stroke="#b9c6cc" stroke-width="1.500"/></svg></button><button class="p4"><svg class="i14"><use href="#prt"/></svg>输送料机构-外罩.prt</button><button><svg class="i14" viewBox="0 0 14 14"><path d="M1 2l4-2 1 1v5l4-2 4 2v5l-7 3-6-3z" fill="#2f6fe0" stroke="#123c98"/></svg>_0</button></div>
        <div class="scene">
          <svg class="model" viewBox="1363 228 536 721" preserveAspectRatio="none">
            <path d="M1657 396q30-10 52 7 19 10 20 25 12 22 5 48-8 22-29 22l-221 106-43-70 204-102z" fill="#868686"/>
            <path d="M1656 396q30-8 53 8M1729 426q12 25 4 50-8 16-29 24" fill="none" stroke="#333" stroke-width="2"/>
            <path d="M1428 510l216-107v28l-213 106z" fill="#888"/>
            <path d="M1428 510l3 27 11-6-12-20z" fill="#d8d8d8"/>
            <path d="M1428 510l216-106v5l-214 104z" fill="#c4c4c4"/>
            <path d="M1431 537l-3-27 216-107" fill="none" stroke="#333"/>
            <path d="M1431 537l215-106M1520 492l80-39" stroke="#303030" stroke-width="3"/>
            <path d="M1442 534l42 70" stroke="#333" stroke-width="2"/>
            <path d="M1484 605l217-108 2 31-216 106z" fill="#c2c2c2"/>
            <path d="M1484 605l217-107" stroke="#e8e8e8" stroke-width="3"/>
            <path d="M1484 603l217-107M1486 607l215-106" stroke="#333" stroke-width="1"/>
            <path d="M1484 605l3 30 216-107-2-34" fill="none" stroke="#333" stroke-width="2.500"/>
            <path d="M1646 404h81l1 28h-81z" fill="#8f8f8f"/><path d="M1708 404h19v22q-8-16-19-22z" fill="#e4e5e6"/>
            <path d="M1646 403h81v29M1646 430l82 2M1648 432l80 1" fill="none" stroke="#444"/><path d="M1647 405h80" stroke="#ddd"/>
            <path d="M1645 403v29" stroke="#222" stroke-width="3"/>
            <path d="M1646 417l82 2" stroke="#4a9ee8" stroke-width="1.500"/><path d="M1728 415l14 5-14 4z" fill="#18a0f0"/>
            <path d="M1630 426l16-11v9z" fill="#9a8848"/>
            <path d="M1728 416l31-78M1646 415l88-42 10 24 3 22" fill="none" stroke="#a8985c" stroke-width="1.200"/>
            <circle cx="1746" cy="420" r="4.500" fill="#ab9850"/>
            <path d="M1409 949l17-9 8 9z" fill="#ccc" stroke="#999"/><path d="M1426 934v11" stroke="#0a3cf0" stroke-width="3"/><path d="M1423 928h6l-6 6h6" fill="none" stroke="#0a3cf0"/>
          </svg>
          <label class="float"><i></i>长度<span class="combo"><input value="100"></span></label>
          <span class="mark">UG<b>爱好者论坛</b> WWW.UGSNX.COM</span>
        </div>
      </section>
    </div>
  </section>

  <svg class="arrows" viewBox="0 0 1899 949" preserveAspectRatio="none">
    <path d="M156 434l14-14-2 7L995 216l416-104.500L995 219 170 434l4 5z" fill="#ff2113"/>
    <path d="M1154 422l2-23 6 4L1425 118 1169 410l6 4z" fill="#ffc000"/>
    <path d="M1658 408l-2-20-4 3L1429 120l216 277-4 4z" fill="#ffc000"/>
  </svg>
</main>
</body>
</html>
```
FILE: styles.css
```css
* { box-sizing: border-box; }
body { margin: 0; font-family: "Noto Sans", "Noto Sans CJK SC", sans-serif; font-size: 12px; line-height: 16px; color: #222; }
button, input, select { font: inherit; color: inherit; margin: 0; padding: 0; border: 0; background: none; border-radius: 0; appearance: none; min-width: 0; }
a { color: inherit; text-decoration: none; }
svg { display: block; flex: none; }
table { border-collapse: collapse; table-layout: fixed; }
th, td { padding: 0; font-weight: 400; text-align: left; }
.defs { position: absolute; width: 0; height: 0; }
.i12 { width: 12px; height: 12px; }
.i14 { width: 14px; height: 14px; }
.i16 { width: 16px; height: 16px; }
.i18 { width: 18px; height: 18px; }
.i24 { width: 24px; height: 24px; }

.screen { position: relative; height: 100vh; display: grid; grid-template-columns: 995fr 904fr; overflow: hidden; background: linear-gradient(90deg, #ddd 62%, #8a8a8a 62% 64%, #d8333c 64% 67%, #3f4a58 67%); }
.arrows { position: absolute; inset: 0; width: 100%; height: 100%; pointer-events: none; }

/* browser window */
.browser { display: flex; flex-direction: column; min-width: 0; overflow: hidden; background: #f7f7f7; }
.tabstrip { display: flex; justify-content: space-between; height: 9px; }
.tabstrip span { height: 5px; background: #e7e7e7; flex: 0 0 42%; border-bottom-right-radius: 5px; }
.tabstrip span + span { flex-basis: 34%; border-radius: 0 0 0 5px; }
.address { display: flex; align-items: center; gap: 18px; height: 32px; padding-left: 12px; background: #fff; border: solid #ccc; border-width: 1px 0; border-radius: 16px 0 0 16px; }
.lock { width: 12px; height: 15px; }
.url { font-family: Roboto, "Noto Sans", sans-serif; font-size: 14px; line-height: 20px; color: #767676; white-space: nowrap; }
.url b { font-weight: 400; color: #000; }
.bookmarks { display: flex; align-items: center; gap: 16px; height: 38px; padding: 2px 0 0 16px; color: #000; border-bottom: 1px solid #e3e3e3; white-space: nowrap; }
.bookmarks a { display: flex; align-items: center; gap: 6px; }
.bookmarks .wide { width: 138px; }
.fav { width: 16px; height: 16px; font-size: 12px; font-weight: 700; line-height: 16px; text-align: center; color: #fff; }
.green { background: #5b9c0c; }
.orange { background: #ee5a1c; border-radius: 3px; }
.page { flex: 1; display: flex; min-height: 0; padding-bottom: 10px; background: #fff; }
.edge { width: 2px; margin: 0 10px -10px 0; background: linear-gradient(#1d5596 0 30px, #8a8f96 30px 60px, #243a10 64px 94px, #73797f 98px 200px, #8f959b 230px, #4a3d34 300px 320px, #73797f 330px 490px, #243010 495px 525px, #73797f 535px 780px, #173f78 785px 815px, #777 820px); }
.post { flex: 1; display: flex; min-width: 0; }
.panel { flex: 0 0 474px; padding-right: 14px; overflow: hidden; background: #fafafa; border-right: 2px solid #bdbdbd; font-size: 18px; line-height: 24px; }
.hbox { width: 458px; height: 563px; border-right: 1px solid #ddd; }
.hist { width: 456px; }
.hist th { height: 16px; overflow: hidden; border-bottom: 1px solid #d8d8d8; vertical-align: bottom; }
.hist th:nth-child(1) { width: 241px; vertical-align: top; }
.hist th:nth-child(2), .hist th:nth-child(3) { width: 36px; }
.hist th + th { border-left: 1px solid #d0d0d0; padding-left: 10px; }
.hist th span { display: flex; align-items: flex-end; height: 12px; margin-bottom: 3px; overflow: hidden; white-space: nowrap; }
.tri { display: block; width: 0; height: 0; border: solid transparent; border-width: 0 7px 7px; border-bottom-color: #222; }
.hist .tri { margin: -3px 0 0 12px; }
.hist tbody tr { height: 30px; }
.hist tbody tr:nth-child(4n) { height: 31px; }
.hist td { color: #333; white-space: nowrap; }
.hist td div { display: flex; align-items: center; margin-left: -2px; }
.hist td:last-child { padding-left: 8px; }
.half { width: 18px; height: 22px; margin-right: 5px; }
.ey { width: 22px; height: 22px; }
.fi { width: 24px; height: 24px; margin-right: 6px; }
.tk { width: 22px; height: 20px; margin: 2px 0 0 8px; }
.mk { width: 12px; height: 22px; margin-left: 12px; }
.hist .cur td { font-weight: 700; color: #222; }
.hist .off td { color: #b0b0b0; }
.hbar { width: 317px; height: 3px; margin-top: 108px; background: #8a8a8a; }
.splitter { width: 458px; height: 8px; background: #d6d6d6; border: solid #a5a5a5; border-width: 1px 1px 1px 0; }
.sec { display: flex; align-items: center; width: 459px; height: 36px; padding-top: 6px; margin-left: -1px; color: #1878a0; border-bottom: 2px solid #d9d9d9; }
.sec + .sec { border-bottom-width: 4px; height: 38px; }
.detail { width: 458px; height: 220px; border-right: 1px solid #ddd; }
.sec3 { display: block; height: 42px; padding-top: 6px; margin-left: -1px; color: #1878a0; }
.expr { width: 447px; height: 178px; border: solid #ddd; border-width: 1px 1px 0 0; }
.expr thead { display: block; }
.expr tr { display: flex; margin-right: 3px; border-bottom: 1px solid #d8d8d8; }
.expr th { height: 33px; padding: 4px 10px; line-height: 26px; border-right: 1px solid #d8d8d8; }
.expr th:nth-child(1) { width: 46px; }
.expr th:nth-child(2) { width: 61px; }
.expr th:nth-child(3) { display: flex; align-items: center; gap: 27px; width: 133px; }
.expr th:nth-child(4) { flex: 1; border: 0; }
.photo { flex: 1; min-width: 0; height: 100%; }

/* NX window */
.nx { display: flex; flex-direction: column; min-width: 0; margin-top: 2px; padding-left: 3px; overflow: hidden; background: #f0f0f0; border: solid #a0a0a0; border-width: 1px 0 0 1px; }
.title { display: flex; align-items: center; height: 33px; padding: 0 0 1px; color: #111; font-size: 11px; }
.logo { width: 42px; padding: 2px 0 0 4px; font-family: "Liberation Sans", sans-serif; font-size: 22px; color: #7f9fb5; }
.qa { display: flex; align-items: center; height: 24px; border-left: 1px solid #bdbdbd; }
.qa button { display: flex; align-items: center; gap: 4px; }
.s1 { width: 32px; padding-left: 9px; }
.s2 { width: 64px; padding-left: 8px; gap: 9px; }
.s3 { width: 75px; padding-left: 7px; gap: 9px; }
.s4 { width: 41px; padding-left: 6px; gap: 8px; }
.s5 { width: 29px; padding-left: 6px; }
.s6 { padding-left: 6px; gap: 7px; }
.ver { margin-left: auto; font-size: 12px; white-space: nowrap; }
.car { flex: none; width: 0; height: 0; border: solid transparent; border-width: 4px 3px 0; border-top-color: #222; }
.car.upw { border-width: 0 3px 4px; border-bottom-color: #888; }
.car.bar { width: 7px; height: 7px; border: 0; border-top: 1px solid #222; background: linear-gradient(#222, #222) 1px 2px / 5px 1px no-repeat, linear-gradient(#222, #222) 2px 3px / 3px 1px no-repeat, linear-gradient(#222, #222) 3px 4px / 1px 1px no-repeat; }
.tabs { display: flex; align-items: flex-end; height: 28px; background: #bdbdbd; font-size: 13px; white-space: nowrap; }
.tabs button { height: 26px; padding: 0 13px 2px; }
.tabs .file { width: 81px; height: 28px; margin-right: 2px; background: #569fb8; color: #fff; }
.tabs .on { background: #f0f0f0; color: #006a8a; }
.ribbon { display: grid; grid-template-columns: 62fr 177fr 164fr 150fr 94fr 94fr 160fr; flex: none; height: 94px; padding: 4px 0 3px; border-bottom: 1px solid #bdbdbd; font-size: 11px; }
.grp { display: flex; flex-direction: column; min-width: 0; border-right: 1px solid #bdbdbd; padding: 0 4px; }
.grp:last-child { border: 0; padding-right: 0; }
.row { flex: 1; display: flex; align-items: flex-start; min-width: 0; padding-top: 1px; }
.big { display: flex; flex-direction: column; align-items: center; flex: none; width: 52px; line-height: 16px; }
.big .ico { width: 30px; height: 30px; margin: 1px 0 5px; }
.big .car { margin-top: 5px; }
.frame { display: grid; place-items: center; width: 38px; height: 35px; margin-bottom: 1px; border: 1px solid #bdbdbd; border-radius: 4px; }
.sk { width: 46px; }
.w48 { width: 46px; }
.w40 { width: 40px; margin-left: 1px; }
.w54 { width: 53px; }
.w66 { width: 62px; padding: 0 3px; }
.ml { margin-left: 4px; }
.gal { display: grid; grid-template-columns: repeat(3, 22px); gap: 14px 11px; align-content: center; justify-content: center; width: 100px; height: 66px; margin-left: 5px; background: #fafafa; border: 1px solid #bdbdbd; }
.gal svg { width: 22px; height: 20px; }
.cars { display: flex; flex-direction: column; align-items: center; justify-content: space-between; width: 16px; height: 57px; padding-top: 9px; }
.cap { display: flex; align-items: center; height: 12px; padding: 0 4px 0 0; color: #00688b; }
.cap span { flex: 1; text-align: center; }
.list { display: flex; flex-direction: column; justify-content: space-around; width: 71px; height: 66px; padding-left: 2px; background: #fafafa; border: 1px solid #bdbdbd; overflow: hidden; }
.list button { display: flex; align-items: center; gap: 4px; white-space: nowrap; }
.selbar { display: flex; align-items: center; flex: none; height: 48px; padding-left: 10px; border-bottom: 1px solid #8a9090; font-size: 11px; }
.menu { display: flex; align-items: center; gap: 4px; width: 77px; height: 39px; border-right: 1px solid #bdbdbd; white-space: nowrap; }
.combo { position: relative; display: flex; height: 20px; background: #fff; border: 1px solid #a8a8a8; }
.combo::after, .fld::after { content: ""; position: absolute; right: 5px; top: 50%; margin-top: -2px; border: solid transparent; border-width: 4px 4px 0; border-top-color: #222; pointer-events: none; }
.combo select, .combo input { width: 100%; padding-left: 3px; }
.c1 { width: 133px; margin: 0 8px 0 12px; }
.c2 { width: 140px; }
.c3 { width: 140px; margin-left: 10px; }
.tools { display: flex; align-items: center; justify-content: space-between; width: 235px; margin-left: 10px; }
.t2 { width: 116px; }

.work { flex: 1; display: grid; grid-template-columns: 32px 332px 1fr; min-height: 0; }
.rail { display: flex; flex-direction: column; background: #bebebe; border-right: 1px solid #a8a8a8; }
.rail button { display: grid; place-items: center; height: 42px; flex: none; }
.rail button svg { width: 24px; height: 24px; }
.rail .r0 { height: 26px; margin-bottom: 16px; }
.rail .r0 svg { width: 14px; height: 14px; }
.rail .on { margin: -1px -1px 1px 2px; background: #f4f4f4; border: 1px solid #a8a8a8; border-right: 0; }
.rail .far { height: 54px; margin-top: 6px; }
.rail .tall { height: 54px; }
.rail .low { height: 40px; }
.nav { display: flex; flex-direction: column; min-width: 0; min-height: 0; background: #f0f0f0; border-right: 1px solid #909898; }
.nhead { display: flex; align-items: center; justify-content: space-between; flex: none; height: 28px; padding: 2px 16px 0 9px; }
.max { width: 12px; height: 11px; border: 1px solid #222; border-top-width: 2px; }
.tbox { flex: none; height: 228px; margin: 0 9px 0 6px; padding-right: 1px; border: 1px solid #b8b8b8; border-bottom: 0; overflow: hidden; }
.tree { width: 100%; }
.tree th { height: 22px; padding-left: 6px; border-right: 1px solid #d0d0d0; border-bottom: 1px solid #d0d0d0; overflow: hidden; white-space: nowrap; }
.tree .tri { display: inline-block; margin: 0 0 2px 18px; border-width: 0 5px 5px; }
.tree th:nth-child(2) { width: 100px; }
.tree th:nth-child(3) { width: 13px; border-right: 0; }
.tree tbody tr { height: 20px; background: #fafafa; }
.tree tbody tr:nth-child(even) { background: #f4f4f4; }
.tree td { border-right: 1px solid #ddd; border-bottom: 1px solid #ddd; white-space: nowrap; }
.tree td:last-child { border-right: 0; }
.tree td + td { padding-left: 7px; }
.tree td div, .tree label { display: flex; align-items: center; gap: 4px; height: 19px; padding-left: 6px; position: relative; }
.ex { width: 9px; height: 9px; background: #fff; border: 1px solid #bbb; font-size: 10px; line-height: 6px; }
.in1::before, .in2::before { content: ""; position: absolute; left: 10px; top: -10px; width: 8px; height: 20px; border: dotted #999; border-width: 0 0 1px 1px; }
.tree div.in1 { padding-left: 19px; }
.tree label.in2 { padding-left: 41px; gap: 3px; }
.in2::before { left: 29px; }
.tree .off { color: #a8a8a8; }
.tree .cur td { font-weight: 700; }
input[type="checkbox"] { width: 12px; height: 12px; flex: none; background: #fff; border: 1px solid #111; position: relative; }
.tree input:checked::after { content: ""; position: absolute; left: 3px; top: -1px; width: 4px; height: 8px; border: solid #10b030; border-width: 0 2px 2px 0; transform: rotate(38deg); }

.dlg { flex: 1; display: flex; flex-direction: column; min-height: 0; margin: 0 -1px 0 4px; }
.dh { display: flex; align-items: center; gap: 8px; flex: none; height: 24px; padding: 0 8px 0 7px; background: #569fb8; color: #fff; font-size: 14px; }
.dh span { flex: 1; }
.db { flex: 1; min-height: 0; padding: 4px 5px 0; background: #dcdcdc; border: solid #a8a8a8; border-width: 0 1px; overflow: hidden; }
.inner { height: 100%; padding: 0 9px; background: #f0f0f0; }
.h1 { display: flex; align-items: center; justify-content: space-between; height: 26px; margin: 0 -2px 4px; color: #006a85; font-size: 14px; }
.chev { width: 10px; height: 8px; }
.chev.dn { transform: rotate(180deg); }
.body { display: flex; flex-direction: column; gap: 2px; }
.pick { display: flex; gap: 2px; height: 32px; margin-bottom: 6px; }
.pick div { flex: 1; display: flex; align-items: center; gap: 6px; padding-left: 2px; background: #ffe07a; }
.pick button { display: grid; place-items: center; width: 32px; background: #ffe07a; }
.opts { display: flex; align-items: center; gap: 2px; height: 32px; margin-bottom: 4px; }
.opts span { flex: 1; }
.opts button { display: grid; place-items: center; width: 32px; height: 32px; }
.opts svg { width: 24px; height: 24px; }
.opts .on { background: #8cc2d2; }
.opts .dd { width: 20px; margin-left: 5px; border: 1px solid #a0a0a0; }
.opts .car { border-width: 5px 5px 0; border-top-color: #333; }
.fr { display: flex; align-items: center; height: 26px; }
.fr > label { flex: 1; margin-top: -2px; }
.fl { display: grid; place-items: center; width: 23px; height: 23px; margin: 0 3px 3px 0; border: 1px solid #999; }
.fld { position: relative; display: flex; align-items: center; width: 152px; height: 26px; background: #fff; border: 1px solid #a8a8a8; }
.fld input { width: 84px; margin: -3px 0 0 5px; }
.fld select { flex: 1; padding-left: 1px; height: 18px; }
.selv { display: flex; width: 90px; margin-top: -3px; padding-left: 5px; }
.selv input { width: 22px; margin: 0; padding: 0; background: #0078d7; color: #fff; }
.ic { padding-left: 5px; }
.ic select { padding-left: 3px; }
fieldset { margin: 0; padding: 0 8px; border: 1px solid #bdbdbd; background: #dcdcdc; min-width: 0; }
.gh { display: flex; align-items: center; justify-content: space-between; height: 22px; margin-right: -3px; color: #006a85; }
.g1 { height: 83px; }
.g2 { height: 93px; }
.g3 { height: 24px; }
.cb { display: flex; align-items: center; gap: 5px; height: 23px; }
.cb:first-of-type { margin-top: 6px; }
.cb input { width: 13px; height: 13px; }
.cb input:checked::after { content: ""; position: absolute; left: 3px; top: 0; width: 4px; height: 7px; border: solid #333; border-width: 0 1px 1px 0; transform: rotate(40deg); }
.g2 .gh { margin-bottom: 7px; }
.gr { display: flex; align-items: center; justify-content: space-between; height: 26px; margin-bottom: 2px; }
.eq { display: flex; align-items: center; width: 152px; height: 26px; padding: 1px; background: #fff; border: 1px solid #a8a8a8; }
.eq input { width: 85px; height: 22px; padding: 0 0 4px 3px; background: #f5f5f5; }
.eq span { flex: 1; padding-left: 5px; }
.eq b { width: 13px; color: #11116a; font-size: 16px; }
.eq.sm { width: 106px; }
.eq.sm b { margin-left: 4px; }
.ok { align-self: flex-end; width: 24px; height: 20px; background: #74b2c8; }

/* graphics view */
.view { display: flex; flex-direction: column; min-width: 0; min-height: 0; }
.ptabs { display: flex; flex: none; height: 22px; border-bottom: 2px solid #569fb8; background: #f4f4f4; white-space: nowrap; overflow: hidden; }
.ptabs button { display: flex; align-items: center; flex: none; gap: 5px; height: 20px; padding: 0 8px; }
.ptabs .p2 { width: 93px; margin-left: 5px; padding-left: 15px; }
.ptabs .on { width: 133px; background: #569fb8; color: #fff; }
.ptabs .p4 { width: 156px; }
.nt { width: 10px; height: 12px; }
.xx { width: 8px; height: 8px; margin-left: 2px; }
.scene { position: relative; flex: 1; min-height: 0; background: linear-gradient(#b3b4b5, #bcbdbe 10%, #d9dadb 58%, #e5e6e7 85%, #e6e7e8); overflow: hidden; }
.model { width: 100%; height: 100%; }
.float { position: absolute; top: 81px; right: 28px; display: flex; align-items: center; width: 112px; height: 31px; padding: 0 3px 0 2px; background: #f0f0f0; border: 1px solid #a8a8a8; }
.float i { width: 7px; height: 24px; margin-right: 9px; background: radial-gradient(#aaa 1px, transparent 1px) 0 0 / 4px 5px; }
.float .combo { flex: 1; height: 23px; margin-left: 2px; }
.mark { position: absolute; right: 4px; bottom: 3px; font-family: "Liberation Mono", "Noto Sans CJK SC", monospace; font-size: 13px; line-height: 18px; color: #666; text-shadow: 1px 1px #fff; white-space: nowrap; }
.mark b { font-size: 16px; font-weight: 400; }
```
